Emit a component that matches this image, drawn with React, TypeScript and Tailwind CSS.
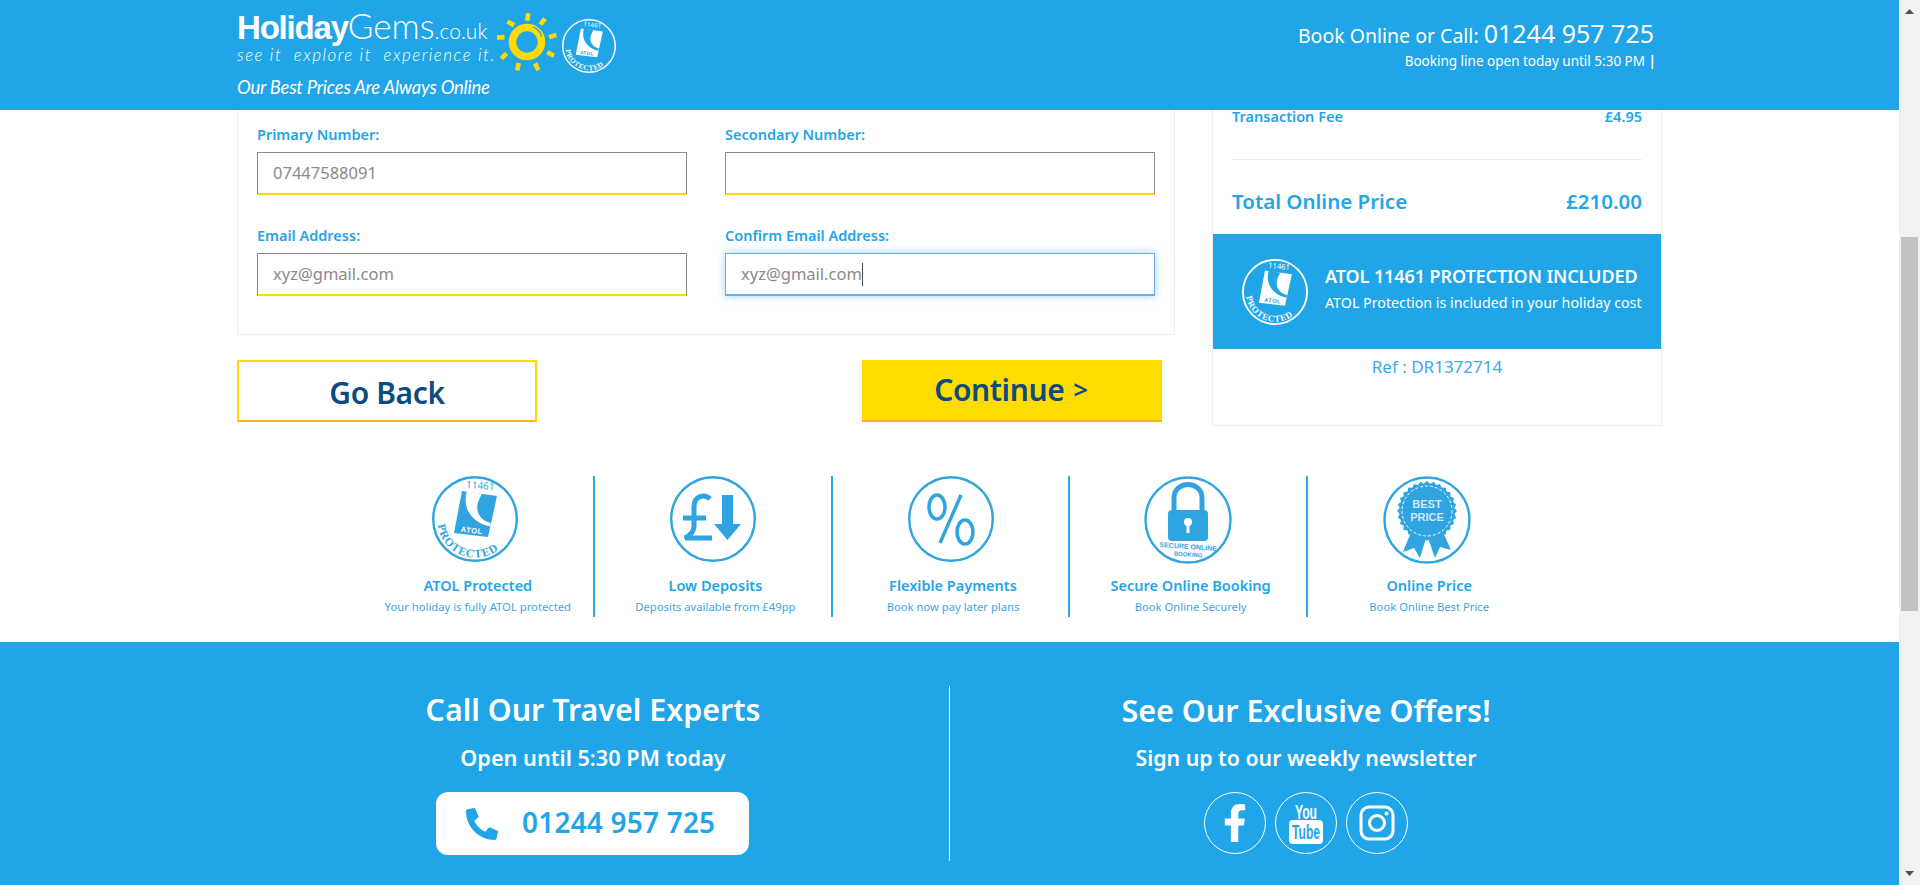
import React from "react";
import { FaPhoneAlt, FaFacebookF } from "react-icons/fa";

const font = { fontFamily: '"Noto Sans", "Open Sans", sans-serif' };

function Atol({ color, size, bg }: { color: string; size: number; bg: string }) {
  const id = `arc-${color.replace("#", "")}-${size}`;
  return (
    <svg width={size} height={size} viewBox="0 0 86 86" fill="none" className="shrink-0">
      <circle cx="43" cy="43" r="41.8" stroke={color} strokeWidth="2.4" />
      <text x="48" y="13" fontSize="10" fill={color} textAnchor="middle" fontFamily="Noto Sans" transform="rotate(5 48 13)">11461</text>
      <path d="M30 15 L65 20 L56 61 L22 57 Z" fill={color} />
      <path d="M35 15 C 30 30 38 46 58 50.5 L58.8 47 C 47 44 40 33 50 18 Z" fill={bg} />
      <text x="39.5" y="57" fontSize="7.5" fontWeight="700" fill={bg} textAnchor="middle" fontFamily="Liberation Sans" transform="rotate(6 39.5 57)" letterSpacing="0.6">ATOL</text>
      <path id={id} d="M5.5 48 A 38 38 0 0 0 78 59" />
      <text fontSize="11.5" fontWeight="700" fill={color} fontFamily="Liberation Serif" letterSpacing="0.9">
        <textPath href={`#${id}`} startOffset="1">PROTECTED</textPath>
      </text>
    </svg>
  );
}

function Sun() {
  const list = [
    [527.7, 17, 8], [542.7, 21.7, 38], [552.7, 36, 72], [550.7, 54, 118], [536.7, 66.7, 156], [518, 66.7, 190],
    [504, 56, 225], [500.7, 37.3, 268], [510.7, 23.3, -60],
  ];
  return (
    <svg width="64" height="64" viewBox="495 10 64 64" className="shrink-0">
      <circle cx="527" cy="42" r="14.5" fill="none" stroke="#ffdc00" strokeWidth="7.5" />
      <path d="M533 27 C 538 29 541 33 541.5 37" fill="none" stroke="#1fa5e8" strokeWidth="1.2" />
      {list.map(([x, y, r], i) => (
        <rect key={i} x={x - 2.3} y={y - 3.8} width="4.6" height="7.6" fill="#ffdc00" transform={`rotate(${r} ${x} ${y})`} />
      ))}
    </svg>
  );
}

function LogoBlock() {
  return (
    <div className="flex items-start">
      <div className="w-[258px] text-white">
        <div className="mt-[9px] h-[32px] leading-[32px] whitespace-nowrap text-[33px] tracking-[-1.2px]" style={{ fontFamily: '"Liberation Sans", sans-serif' }}>
          <span className="font-bold">Holiday</span>
          <span className="text-[35px] tracking-[0px]" style={{ fontFamily: '"Lato", sans-serif', fontWeight: 300 }}>Gems</span>
          <span className="text-[21px] tracking-[0px]" style={{ fontFamily: '"Lato", sans-serif', fontWeight: 300 }}>.co.uk</span>
        </div>
        <div className="mt-[5px] h-[18px] leading-[18px] text-[17px] italic whitespace-pre tracking-[1.5px]" style={{ fontFamily: '"Lato", sans-serif', fontWeight: 300 }}>see it  explore it  experience it.</div>
        <div className="mt-[12px] h-[22px] leading-[22px] text-[18.4px] italic whitespace-nowrap tracking-[-0.2px]" style={{ fontFamily: '"Lato", sans-serif', fontWeight: 400 }}>Our Best Prices Are Always Online</div>
      </div>
      <div className="mt-[10px]"><Sun /></div>
      <div className="mt-[19px] ml-[3px]"><Atol color="#ffffff" size={54} bg="#1fa5e8" /></div>
    </div>
  );
}

function Header() {
  return (
    <header className="h-[110px] bg-[#1fa5e8] shrink-0 pl-[237px] pr-[245px] flex justify-between items-start text-white">
      <LogoBlock />
      <div className="text-right pt-[18px]">
        <div className="h-[30px] leading-[30px] whitespace-nowrap text-[19.5px]">
          Book Online or Call: <span className="text-[25px]">01244 957 725</span>
        </div>
        <div className="mt-[3px] h-[20px] leading-[20px] text-[13.5px] whitespace-nowrap -mr-[2px]">
          Booking line open today until 5:30 PM <span className="font-bold">|</span>
        </div>
      </div>
    </header>
  );
}

function Field({ label, value, focused }: { label: string; value?: string; focused?: boolean }) {
  return (
    <div className="w-[430px]">
      <div className="h-[20px] leading-[20px] text-[14.5px] font-semibold text-[#1fa5e8] whitespace-nowrap">{label}</div>
      <div
        className={
          focused
            ? "mt-[8px] h-[43px] border border-b-2 border-[#66afe9] shadow-[0_0_8px_rgba(102,175,233,0.6)] bg-white pl-[15px] flex items-center text-[16.5px] text-[#8a8a8a]"
            : "mt-[8px] h-[43px] border border-[#8a8a8a] border-b-2 border-b-[#ffdc00] bg-white pl-[15px] flex items-center text-[16.5px] text-[#8a8a8a]"
        }
      >
        {value}
        {focused && <span className="w-px h-[23px] bg-[#444]" />}
      </div>
    </div>
  );
}

function Form() {
  return (
    <div className="w-[938px]">
      <div className="h-[225px] border border-t-0 border-[#eeeeee] pl-[19px] pr-[19px] pt-[14px]">
        <div className="flex justify-between">
          <Field label="Primary Number:" value="07447588091" />
          <Field label="Secondary Number:" />
        </div>
        <div className="flex justify-between mt-[30px]">
          <Field label="Email Address:" value="xyz@gmail.com" />
          <Field label="Confirm Email Address:" value="xyz@gmail.com" focused />
        </div>
      </div>
      <div className="mt-[25px] flex justify-between pr-[13px]">
        <div className="w-[300px] h-[62px] border-2 border-[#ffdc00] border-b-[#ffb30f] flex items-center justify-center text-[30px] font-semibold text-[#0d4a80] tracking-[-0.4px] pt-[3px]">
          Go Back
        </div>
        <div className="w-[300px] h-[62px] bg-[#ffdc00] border-b-2 border-[#ffb30f] flex items-center justify-center text-[30px] font-semibold text-[#0d4a80] tracking-[-0.4px] pb-[2px] pr-[2px]">
          Continue<span className="ml-[9px] text-[26px]">&gt;</span>
        </div>
      </div>
    </div>
  );
}

function Summary() {
  return (
    <div className="w-[450px] h-[316px] border border-t-0 border-[#eeeeee] overflow-hidden">
      <div className="px-[19px] flex justify-between -mt-[4px] text-[14.5px] leading-[20px] font-semibold text-[#1fa5e8]">
        <span>Transaction Fee</span>
        <span>£4.95</span>
      </div>
      <div className="mx-[19px] mt-[33px] border-t border-[#eeeeee]" />
      <div className="px-[19px] mt-[26px] h-[30px] leading-[30px] flex justify-between text-[20.5px] font-semibold text-[#1fa5e8]">
        <span>Total Online Price</span>
        <span>£210.00</span>
      </div>
      <div className="mt-[18px] h-[115px] bg-[#1fa5e8] pl-[29px] flex items-center text-white">
        <Atol color="#ffffff" size={66} bg="#1fa5e8" />
        <div className="ml-[17px] pb-[7px]">
          <div className="h-[26px] leading-[26px] text-[18px] font-semibold tracking-[-0.1px] whitespace-nowrap">ATOL 11461 PROTECTION INCLUDED</div>
          <div className="mt-[3px] h-[22px] leading-[22px] text-[14.25px] whitespace-nowrap">ATOL Protection is included in your holiday cost</div>
        </div>
      </div>
      <div className="mt-[7px] text-center text-[17px] leading-[22px] text-[#3ba8e8]">Ref : DR1372714</div>
    </div>
  );
}

const C = "#2fa4e0";
function PoundIcon() {
  return (
    <svg width="86" height="86" viewBox="0 0 86 86" fill="none">
      <circle cx="43" cy="43" r="41.8" stroke={C} strokeWidth="2.4" />
      <path d="M40 23 C 35 18 24 19 24 31 L24 50 C24 56 21 59 15 62 L42 62 M13 42 L36 42" stroke={C} strokeWidth="5" />
      <path d="M52 19 H63 V48 H71 L57.5 64 L44 48 H52Z" fill={C} />
    </svg>
  );
}
function PercentIcon() {
  return (
    <svg width="86" height="86" viewBox="0 0 86 86" fill="none">
      <circle cx="43" cy="43" r="41.8" stroke={C} strokeWidth="2.4" />
      <ellipse cx="29" cy="31" rx="8" ry="12" stroke={C} strokeWidth="3.6" />
      <ellipse cx="57" cy="56" rx="8" ry="12" stroke={C} strokeWidth="3.6" />
      <path d="M53 19 L32 67" stroke={C} strokeWidth="3.4" />
    </svg>
  );
}
function LockIcon() {
  return (
    <svg width="88" height="88" viewBox="0 0 88 88" fill="none">
      <circle cx="44" cy="44" r="42.5" stroke={C} strokeWidth="2.4" />
      <path d="M30 36 V22 C30 4 58 4 58 22 V36" stroke={C} strokeWidth="5" />
      <rect x="24" y="34" width="40" height="31" rx="4" fill={C} />
      <circle cx="44" cy="46" r="4" fill="white" />
      <rect x="42.5" y="47" width="3" height="10" fill="white" />
      <text x="44" y="73" textAnchor="middle" fontSize="7" fontWeight="700" fill={C} fontFamily="Liberation Sans" transform="rotate(4 44 73)">SECURE ONLINE</text>
      <text x="44" y="80.5" textAnchor="middle" fontSize="6" fontWeight="700" fill={C} fontFamily="Liberation Sans" transform="rotate(4 44 80.5)">BOOKING</text>
    </svg>
  );
}
function PriceIcon() {
  const pts: string[] = [];
  for (let i = 0; i < 56; i++) {
    const r = i % 2 ? 27.5 : 30;
    const a = (i / 56) * Math.PI * 2;
    pts.push(`${(44 + r * Math.cos(a)).toFixed(1)},${(35 + r * Math.sin(a)).toFixed(1)}`);
  }
  return (
    <svg width="88" height="88" viewBox="0 0 88 88" fill="none">
      <circle cx="44" cy="44" r="42.5" stroke={C} strokeWidth="2.4" />
      <path d="M28 56 L20 76 L31 72 L37 82 L43 62Z M60 56 L68 74 L57 71 L52 82 L45 62Z" fill={C} />
      <polygon points={pts.join(" ")} fill={C} />
      <circle cx="44" cy="35" r="25" stroke="white" strokeWidth="1" strokeDasharray="3 2" />
      <text x="44" y="32" textAnchor="middle" fontSize="11" fontWeight="700" fill="#cfe9f8" fontFamily="Liberation Sans">BEST</text>
      <text x="44" y="45" textAnchor="middle" fontSize="11" fontWeight="700" fill="#cfe9f8" fontFamily="Liberation Sans">PRICE</text>
    </svg>
  );
}

function Feature({ icon, title, sub, last }: { icon: React.ReactNode; title: string; sub: string; last?: boolean }) {
  return (
    <div className={last ? "w-[237.6px] h-[141px] pl-[5px] flex flex-col items-center" : "w-[237.6px] h-[141px] pl-[5px] flex flex-col items-center border-r-2 border-[#2aa4e5]"}>
      <div className="h-[88px] -ml-[5px] flex items-start">{icon}</div>
      <div className="mt-[11px] h-[20px] leading-[20px] text-[14.5px] font-semibold text-[#1fa5e8] whitespace-nowrap">{title}</div>
      <div className="mt-[4px] h-[16px] leading-[16px] text-[11.25px] text-[#3ea6e6] whitespace-nowrap">{sub}</div>
    </div>
  );
}

function Features() {
  return (
    <div className="mt-[50px] pl-[4px] flex justify-center">
      <Feature icon={<Atol color={C} size={86} bg="#ffffff" />} title="ATOL Protected" sub="Your holiday is fully ATOL protected" />
      <Feature icon={<PoundIcon />} title="Low Deposits" sub="Deposits available from £49pp" />
      <Feature icon={<PercentIcon />} title="Flexible Payments" sub="Book now pay later plans" />
      <Feature icon={<LockIcon />} title="Secure Online Booking" sub="Book Online Securely" />
      <Feature icon={<PriceIcon />} title="Online Price" sub="Book Online Best Price" last />
    </div>
  );
}

function Social({ children }: { children: React.ReactNode }) {
  return (
    <div className="w-[62px] h-[62px] rounded-full border border-white flex items-center justify-center text-white">{children}</div>
  );
}

function Footer() {
  return (
    <footer className="mt-[25px] flex-1 bg-[#1fa5e8] text-white pl-[237px] pt-[44px]">
      <div className="flex">
        <div className="w-[713px] h-[175px] border-r border-white flex flex-col items-center">
          <div className="mt-[4px] h-[40px] leading-[40px] text-[30.4px] font-semibold whitespace-nowrap">Call Our Travel Experts</div>
          <div className="mt-[14px] h-[28px] leading-[28px] text-[21.7px] font-semibold whitespace-nowrap">Open until 5:30 PM today</div>
          <div className="mt-[20px] -ml-[1px] w-[313px] h-[63px] bg-white rounded-[12px] flex items-center pl-[30px] text-[#1fa5e8]">
            <FaPhoneAlt className="text-[32px]" />
            <span className="ml-[24px] text-[28px] font-semibold tracking-[0.2px] whitespace-nowrap pb-[3px]">01244 957 725</span>
          </div>
        </div>
        <div className="w-[712px] flex flex-col items-center">
          <div className="mt-[4px] h-[40px] leading-[40px] text-[30.5px] font-semibold whitespace-nowrap">See Our Exclusive Offers!</div>
          <div className="mt-[14px] h-[28px] leading-[28px] text-[21.3px] font-semibold whitespace-nowrap">Sign up to our weekly newsletter</div>
          <div className="mt-[20px] flex gap-[9px]">
            <Social><FaFacebookF className="text-[38px]" /></Social>
            <Social>
              <svg width="34" height="41" viewBox="0 0 34 41">
                <text x="17" y="15.5" textAnchor="middle" fontSize="20" fontWeight="700" fill="white" fontFamily="Liberation Sans" textLength="22" lengthAdjust="spacingAndGlyphs">You</text>
                <rect x="0" y="17" width="34" height="24" rx="4" fill="white" />
                <text x="17" y="36" textAnchor="middle" fontSize="20" fontWeight="700" fill="#1fa5e8" fontFamily="Liberation Sans" textLength="28" lengthAdjust="spacingAndGlyphs">Tube</text>
              </svg>
            </Social>
            <Social>
              <svg width="36" height="36" viewBox="0 0 36 36" fill="none" stroke="white">
                <rect x="2" y="2" width="32" height="32" rx="8" strokeWidth="3" />
                <circle cx="18" cy="18" r="7.5" strokeWidth="3" />
                <circle cx="27.5" cy="8.5" r="2" fill="white" stroke="none" />
              </svg>
            </Social>
          </div>
        </div>
      </div>
    </footer>
  );
}

function Scrollbar() {
  return (
    <div className="w-[21px] h-[885px] bg-[#f1f1f1] shrink-0 flex flex-col items-center pt-[9px] pb-[9px]">
      <svg width="9" height="5" viewBox="0 0 9 5" className="shrink-0"><path d="M4.5 0 L9 5 H0Z" fill="#505050" /></svg>
      <div className="mt-[223px] w-[17px] h-[374px] bg-[#c1c1c1]" />
      <div className="flex-1" />
      <svg width="9" height="5" viewBox="0 0 9 5" className="shrink-0"><path d="M0 0 H9 L4.5 5Z" fill="#505050" /></svg>
    </div>
  );
}

export default function App() {
  return (
    <div className="h-[885px] w-[1920px] overflow-hidden flex bg-white" style={font}>
      <div className="w-[1899px] h-[885px] flex flex-col">
        <Header />
        <div className="pl-[237px] flex gap-[37px] items-start">
          <Form />
          <Summary />
        </div>
        <Features />
        <Footer />
      </div>
      <Scrollbar />
    </div>
  );
}
